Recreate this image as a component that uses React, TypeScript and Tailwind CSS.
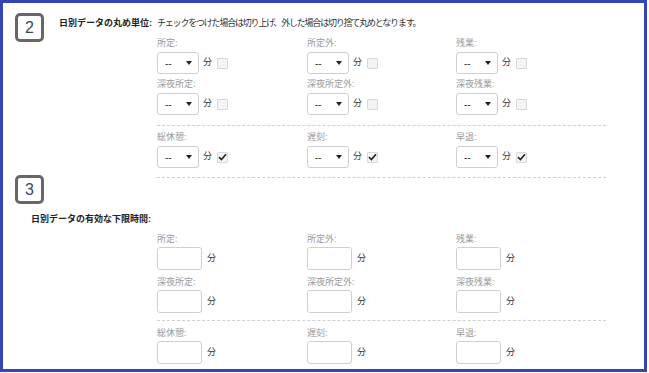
import React from "react";

const FONT = { fontFamily: '"Liberation Sans", "Noto Sans CJK JP", sans-serif' };

type Item = { label: string; checked?: boolean };

const upper: Item[] = [
  { label: "所定:" },
  { label: "所定外:" },
  { label: "残業:" },
  { label: "深夜所定:" },
  { label: "深夜所定外:" },
  { label: "深夜残業:" },
];

const lower: Item[] = [
  { label: "総休憩:", checked: true },
  { label: "遅刻:", checked: true },
  { label: "早退:", checked: true },
];

function Badge({ n }: { n: number }) {
  return (
    <div className="absolute left-[12px] w-[29px] h-[29px] rounded-[5px] border-[3px] border-[#676767] bg-white flex items-center justify-center text-[16px] leading-none text-[#2f4a72]">
      {n}
    </div>
  );
}

function Checkbox({ checked }: { checked?: boolean }) {
  return (
    <span className="ml-[5px] w-[11px] h-[11px] border border-[#d9d9d9] bg-[#f4f4f4] rounded-[1px] flex items-center justify-center">
      {checked && (
        <svg width="9" height="8" viewBox="0 0 9 8">
          <path d="M1 4.2 L3.4 6.5 L8 1.2" fill="none" stroke="#222" strokeWidth="1.6" />
        </svg>
      )}
    </span>
  );
}

function SelectField({ item }: { item: Item }) {
  return (
    <div>
      <div className="text-[9px] leading-[10px] text-[#9a9a9a]">{item.label}</div>
      <div className="mt-[4px] flex items-center">
        <div className="w-[42px] h-[22px] border border-[#cfcfcf] rounded-[3px] bg-white flex items-center pl-[7px] pr-[6px] justify-between">
          <span className="text-[10px] text-[#333]">--</span>
          <svg width="6" height="4" viewBox="0 0 6 4">
            <path d="M0 0 H6 L3 4 Z" fill="#222" />
          </svg>
        </div>
        <span className="ml-[4px] text-[9px] text-[#333]">分</span>
        <Checkbox checked={item.checked} />
      </div>
    </div>
  );
}

function InputField({ item }: { item: Item }) {
  return (
    <div>
      <div className="text-[9px] leading-[10px] text-[#9a9a9a]">{item.label}</div>
      <div className="mt-[3px] flex items-center">
        <div className="w-[45px] h-[23px] border border-[#cfcfcf] rounded-[3px] bg-white" />
        <span className="ml-[5px] text-[9px] text-[#333]">分</span>
      </div>
    </div>
  );
}

function Dashed({ className }: { className: string }) {
  return <div className={`w-[449px] border-t border-dashed border-[#cfcfcf] ${className}`} />;
}

export default function App() {
  return (
    <div className="w-[649px] h-[373px] bg-white" style={FONT}>
      <div className="w-[647px] h-[372px] border-[3px] border-[#3346b3] overflow-hidden">
        {/* Section 2 */}
        <div className="relative pt-[15px]">
          <div className="absolute top-[10px] left-0 w-full">
            <Badge n={2} />
          </div>
          <div className="flex items-center leading-[10px]">
            <div className="w-[154px] pr-[5px] text-right text-[9px] font-bold text-[#222]">
              日別データの丸め単位:
            </div>
            <div className="text-[9px] tracking-[-1.2px] text-[#333]">
              チェックをつけた場合は切り上げ、外した場合は切り捨て丸めとなります。
            </div>
          </div>
          <div className="ml-[154px] mt-[10px]">
            <div className="grid grid-cols-[150px_149px_150px] gap-y-[5px]">
              {upper.map((it) => (
                <SelectField key={it.label} item={it} />
              ))}
            </div>
            <Dashed className="mt-[10px]" />
            <div className="grid grid-cols-[150px_149px_150px] mt-[6px]">
              {lower.map((it) => (
                <SelectField key={it.label} item={it} />
              ))}
            </div>
            <Dashed className="mt-[9px]" />
          </div>
        </div>

        {/* Section 3 */}
        <div className="relative">
          <div className="absolute top-[-3px] left-0 w-full">
            <Badge n={3} />
          </div>
          <div className="pt-[36px] flex leading-[10px]">
            <div className="w-[154px] pr-[6px] text-right text-[9px] font-bold text-[#222]">
              日別データの有効な下限時間:
            </div>
          </div>
          <div className="ml-[154px] mt-[10px]">
            <div className="grid grid-cols-[150px_149px_150px] gap-y-[7px]">
              {upper.map((it) => (
                <InputField key={it.label} item={it} />
              ))}
            </div>
            <Dashed className="mt-[7px]" />
            <div className="grid grid-cols-[150px_149px_150px] mt-[7px]">
              {lower.map((it) => (
                <InputField key={it.label} item={it} />
              ))}
            </div>
          </div>
        </div>
      </div>
    </div>
  );
}
